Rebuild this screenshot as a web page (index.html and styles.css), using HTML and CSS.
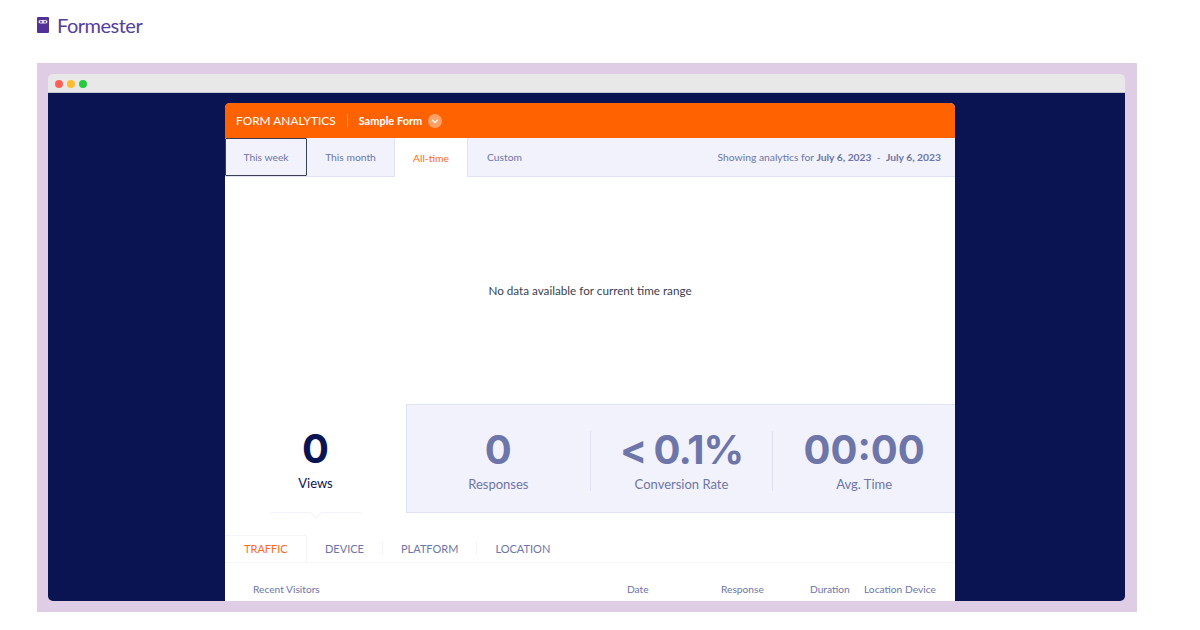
FILE: index.html
```html
<!DOCTYPE html>
<html lang="en">
<head>
    <meta charset="UTF-8">
    <title>Formester</title>
    <link rel="stylesheet" href="styles.css">
</head>
<body>

    <header class="brand">
        <svg class="brand-icon" width="12" height="16" viewBox="0 0 12 16">
            <rect width="12" height="16" rx="1" fill="#533297"/>
            <rect x="1.5" y="3" width="9" height="3.6" rx="1.8" fill="#e6e0f2"/>
            <circle cx="4" cy="4.8" r="1" fill="#533297"/>
            <circle cx="8" cy="4.8" r="1" fill="#533297"/>
        </svg>
        <span class="brand-name">Formester</span>
    </header>

    <div class="frame">
        <div class="window">
            <div class="titlebar">
                <span class="dot dot-red"></span>
                <span class="dot dot-yellow"></span>
                <span class="dot dot-green"></span>
            </div>
            <div class="screen">
                <div class="card">
                    <div class="card-head">
                        <span class="card-title">FORM ANALYTICS</span>
                        <span class="form-name">Sample Form</span>
                        <svg class="form-caret" width="14" height="14" viewBox="0 0 14 14">
                            <circle cx="7" cy="7" r="7" fill="#fff" fill-opacity="0.4"/>
                            <path d="M4.2 5.8 7 8.6l2.8-2.8" fill="none" stroke="#fff" stroke-width="1.3"/>
                        </svg>
                    </div>

                    <div class="range-bar">
                        <div class="range-tab range-focus">This week</div>
                        <div class="range-tab range-month">This month</div>
                        <div class="range-tab range-active">All-time</div>
                        <div class="range-tab range-custom">Custom</div>
                        <div class="range-note">Showing analytics for <b>July 6, 2023</b> &nbsp;-&nbsp; <b>July 6, 2023</b></div>
                    </div>

                    <div class="chart">No data available for current time range</div>

                    <div class="stats">
                        <div class="stat-main">
                            <div class="stat-value">0</div>
                            <div class="stat-label">Views</div>
                            <div class="stat-pointer"></div>
                        </div>
                        <div class="stat-panel">
                            <div class="stat">
                                <div class="stat-value">0</div>
                                <div class="stat-label">Responses</div>
                            </div>
                            <div class="stat">
                                <div class="stat-value stat-rate">&lt; 0.1%</div>
                                <div class="stat-label">Conversion Rate</div>
                            </div>
                            <div class="stat">
                                <div class="stat-value">00:00</div>
                                <div class="stat-label">Avg. Time</div>
                            </div>
                        </div>
                    </div>

                    <div class="detail-tabs">
                        <div class="detail-tab detail-active">TRAFFIC</div>
                        <div class="detail-tab">DEVICE</div>
                        <span class="detail-sep"></span>
                        <div class="detail-tab">PLATFORM</div>
                        <span class="detail-sep"></span>
                        <div class="detail-tab">LOCATION</div>
                    </div>

                    <div class="table-head">
                        <span>Recent Visitors</span>
                        <span>Date</span>
                        <span>Response</span>
                        <span>Duration</span>
                        <span>Location</span>
                        <span>Device</span>
                    </div>
                </div>
            </div>
        </div>
    </div>

</body>
</html>
```

FILE: styles.css
```css
* {
    box-sizing: border-box;
}
body {
    margin: 0;
    background-color: #fff;
    font-family: Lato, "Liberation Sans", sans-serif;
    color: #6e75a8;
}
.brand {
    height: 63px;
    padding: 17px 0 0 37px;
    display: flex;
    align-items: flex-start;
}
.brand-name {
    margin: -2px 0 0 8px;
    font-size: 20px;
    line-height: 20px;
    color: #53409b;
    letter-spacing: -0.5px;
}
.frame {
    width: 1100px;
    height: 549px;
    margin-left: 37px;
    padding: 11px 12px 11px 11px;
    background-color: #dfcde5;
}
.window {
    height: 527px;
    border-radius: 5px;
    overflow: hidden;
    display: flex;
    flex-direction: column;
}
.titlebar {
    height: 19px;
    padding: 1px 0 0 7px;
    display: flex;
    align-items: center;
    gap: 4px;
    background-color: #e8e8e8;
    border-bottom: 1px solid #c6c6d0;
}
.dot {
    width: 8px;
    height: 8px;
    border-radius: 50%;
}
.dot-red {
    background-color: #ff5f57;
}
.dot-yellow {
    background-color: #febc2e;
}
.dot-green {
    background-color: #28c840;
}
.screen {
    flex: 1;
    min-height: 0;
    padding: 10px 0 0 177px;
    background-color: #0b1452;
    overflow: hidden;
}
.card {
    width: 730px;
    height: 520px;
    background-color: #fff;
    border-radius: 5px 5px 0 0;
    overflow: hidden;
}
.card-head {
    height: 35px;
    padding-left: 11px;
    display: flex;
    align-items: center;
    background-color: #ff6200;
    color: #fff;
}
.card-title {
    font-size: 11.9px;
    padding-right: 11px;
    border-right: 1px solid #ff9a5c;
    line-height: 13px;
}
.form-name {
    margin-left: 11px;
    font-size: 11px;
    font-weight: 700;
}
.form-caret {
    margin-left: 6px;
}
.range-bar {
    height: 39px;
    display: flex;
    align-items: stretch;
    background-color: #f1f2fc;
    border-bottom: 1px solid #dfe1f5;
    font-size: 10.3px;
}
.range-tab {
    display: flex;
    align-items: center;
    justify-content: center;
    border-right: 1px solid #dfe1f5;
}
.range-focus {
    width: 82px;
    border: 1px solid #3a3f55;
    border-radius: 1px;
}
.range-month {
    width: 88px;
}
.range-active {
    width: 74px;
    height: 39px;
    background-color: #fff;
    color: #ff6a1a;
    border-left: 1px solid #dfe1f5;
    margin-left: -1px;
}
.range-custom {
    width: 73px;
    border-right: 0;
}
.range-note {
    margin-left: auto;
    padding-right: 14px;
    align-self: center;
    white-space: nowrap;
}
.chart {
    height: 227px;
    padding-top: 106px;
    text-align: center;
    font-size: 11.7px;
    color: #3b3f4f;
}
.stats {
    height: 109px;
    display: flex;
}
.stat-main {
    position: relative;
    width: 181px;
    text-align: center;
    color: #0b1452;
}
.stat-pointer {
    position: absolute;
    left: 46px;
    bottom: 0;
    width: 90px;
    border-bottom: 1px solid #f1f2fc;
}
.stat-pointer::after {
    content: "";
    position: absolute;
    left: 41px;
    top: 0;
    width: 7px;
    height: 7px;
    background-color: #fff;
    border-right: 1px solid #f1f2fc;
    border-bottom: 1px solid #f1f2fc;
    transform: translateY(-3px) rotate(45deg);
}
.stat-panel {
    flex: 1;
    padding-top: 26px;
    display: grid;
    grid-template-columns: repeat(3, 1fr);
    align-items: start;
    background-color: #f1f2fc;
    border: 1px solid #dfe1f5;
    border-right: 0;
}
.stat {
    height: 60px;
    text-align: center;
    border-left: 1px solid #dfe1f5;
}
.stat:first-child {
    border-left: 0;
}
.stat-main .stat-value {
    padding-top: 26px;
}
.stat-value {
    font-family: Inter, "Liberation Sans", sans-serif;
    font-size: 40px;
    font-weight: 700;
    line-height: 38px;
}
.stat-rate {
    letter-spacing: -1px;
    word-spacing: -1px;
}
.stat-label {
    margin-top: 7px;
    font-size: 13px;
    line-height: 16px;
}
.detail-tabs {
    height: 50px;
    padding-top: 22px;
    display: flex;
    align-items: flex-start;
    border-bottom: 1px solid #f6f7fd;
    font-size: 11px;
}
.detail-tab {
    display: flex;
    align-items: center;
    height: 27px;
    padding: 0 18px;
    white-space: nowrap;
}
.detail-active {
    width: 82px;
    padding: 0 0 1px 19px;
    color: #ff6a1a;
    border-top: 1px solid #f4f5fc;
    border-right: 1px solid #f4f5fc;
    background-color: #fff;
}
.detail-sep {
    width: 1px;
    height: 14px;
    margin-top: 6px;
    background-color: #f1f2fc;
}
.table-head {
    padding: 20px 0 0 28px;
    display: grid;
    grid-template-columns: 374px 94px 89px 54px 41px auto;
    font-size: 10.2px;
    line-height: 13px;
    white-space: nowrap;
}
```
